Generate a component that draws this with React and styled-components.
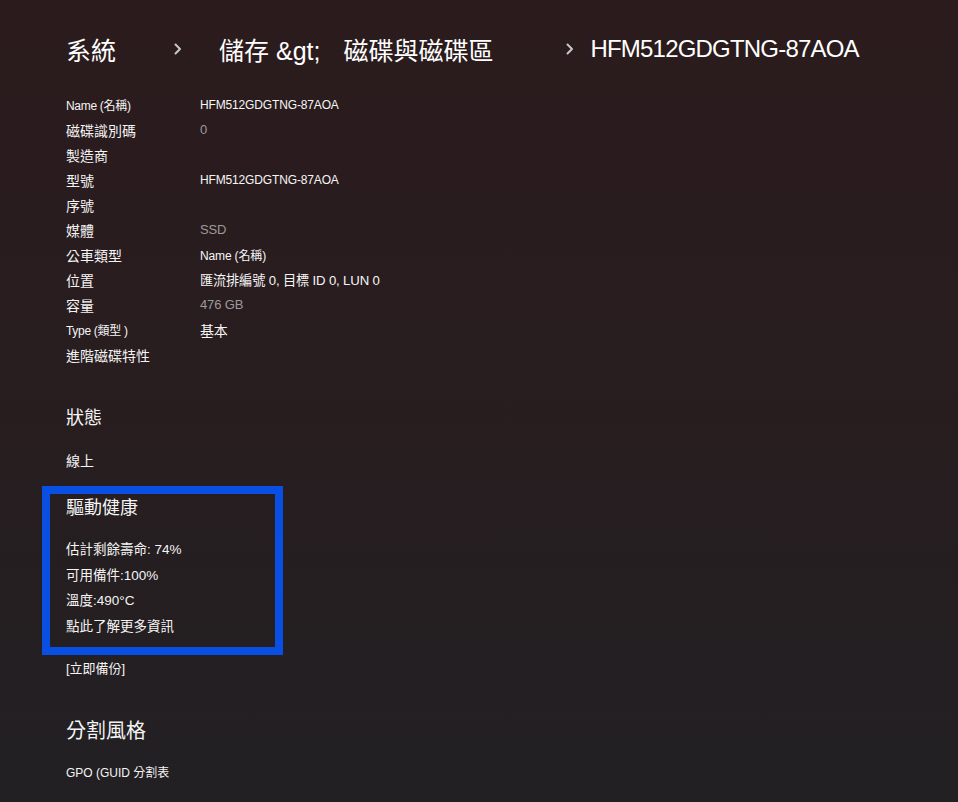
import styled, { createGlobalStyle } from "styled-components";

const GlobalStyle = createGlobalStyle`
  html, body {
    margin: 0;
    padding: 0;
  }
  body {
    background: linear-gradient(180deg, #2b1b1d 0%, #281d1f 45%, #222023 100%);
    min-height: 802px;
    font-family: "Liberation Sans", "Noto Sans CJK TC", sans-serif;
    color: #f2f2f2;
  }
`;

const details = [
  { label: "Name (名稱)", value: "HFM512GDGTNG-87AOA", small: true },
  { label: "磁碟識別碼", value: "0", muted: true },
  { label: "製造商" },
  { label: "型號", value: "HFM512GDGTNG-87AOA" },
  { label: "序號" },
  { label: "媒體", value: "SSD", muted: true },
  { label: "公車類型", value: "Name (名稱)" },
  { label: "位置", value: "匯流排編號 0, 目標 ID 0, LUN 0", size: 13.2 },
  { label: "容量", value: "476 GB", muted: true },
  { label: "Type (類型 )", value: "基本", small: true, size: 14 },
  { label: "進階磁碟特性" },
];

const health = ["估計剩餘壽命: 74%", "可用備件:100%", "溫度:490°C", "點此了解更多資訊"];

const Page = styled.main`
  min-height: 802px;
  padding: 27px 0 0 66px;
  box-sizing: border-box;
`;

const Breadcrumb = styled.nav`
  display: flex;
  align-items: center;
  height: 44px;
  font-size: 25px;
  color: #ffffff;
`;

const Crumb = styled.span`
  white-space: pre;
  margin-left: ${(p) => p.$gap || 0}px;
  font-size: ${(p) => (p.$latin ? "24px" : "25px")};
  letter-spacing: ${(p) => (p.$latin ? "-0.8px" : "0")};
`;

const Chevron = styled.svg`
  width: 10px;
  height: 14px;
  margin-left: ${(p) => p.$gap}px;
  flex: none;
`;

const DetailList = styled.dl`
  margin: 21px 0 0;
  display: grid;
  grid-template-columns: 134px 1fr;
  grid-auto-rows: 25px;
`;

const Label = styled.dt`
  display: flex;
  align-items: center;
  font-size: ${(p) => (p.$small ? "12px" : "14px")};
  letter-spacing: ${(p) => (p.$small ? "-0.3px" : "0")};
  color: #f4f4f4;
`;

const Value = styled.dd`
  margin: 0;
  display: flex;
  align-items: center;
  font-size: ${(p) => (p.$size ? `${p.$size}px` : p.$muted ? "13px" : "12px")};
  letter-spacing: -0.15px;
  color: ${(p) => (p.$muted ? "#9c9a9b" : "#f6f6f6")};
`;

const Heading = styled.h2`
  margin: ${(p) => p.$top || 0}px 0 0;
  font-size: ${(p) => p.$size || 18}px;
  line-height: ${(p) => (p.$size || 18) + 10}px;
  font-weight: 400;
  color: #f4f4f4;
`;

const Line = styled.p`
  margin: ${(p) => p.$top || 0}px 0 0;
  height: ${(p) => p.$h || 25}px;
  display: flex;
  align-items: center;
  font-size: ${(p) => p.$size || 14}px;
  color: #f4f4f4;
`;

const HealthBox = styled.section`
  margin: 14px 0 0 -24px;
  width: 241px;
  box-sizing: border-box;
  border: 8px solid #0a4fe4;
  padding: 0 0 9px 16px;
`;

const ChevronIcon = ({ gap }) => (
  <Chevron $gap={gap} viewBox="0 0 10 14">
    <path d="M2.5 2.5 L7 7 L2.5 11.5" fill="none" stroke="#c9c9c9" strokeWidth="2" strokeLinecap="round" strokeLinejoin="round" />
  </Chevron>
);

export default function App() {
  return (
    <>
      <GlobalStyle />
      <Page>
        <Breadcrumb>
          <Crumb>系統</Crumb>
          <ChevronIcon gap={57} />
          <Crumb $gap={36}>儲存 &amp;gt;</Crumb>
          <Crumb $gap={23}>磁碟與磁碟區</Crumb>
          <ChevronIcon gap={72} />
          <Crumb $gap={15} $latin>HFM512GDGTNG-87AOA</Crumb>
        </Breadcrumb>

        <DetailList>
          {details.map((d) => (
            <>
              <Label key={d.label} $small={d.small}>{d.label}</Label>
              <Value $muted={d.muted} $size={d.size}>{d.value || ""}</Value>
            </>
          ))}
        </DetailList>

        <Heading $top={37}>狀態</Heading>
        <Line $top={15}>線上</Line>

        <HealthBox>
          <Heading>驅動健康</Heading>
          <Line $top={13} $size={13.5} $h={25.7}>{health[0]}</Line>
          {health.slice(1).map((t) => (
            <Line key={t} $size={13.5} $h={25.7}>{t}</Line>
          ))}
        </HealthBox>

        <Line $top={0} $size={13}>[立即備份]</Line>

        <Heading $top={36} $size={20}>分割風格</Heading>
        <Line $top={13} $size={12}>GPO (GUID 分割表</Line>
      </Page>
    </>
  );
}
